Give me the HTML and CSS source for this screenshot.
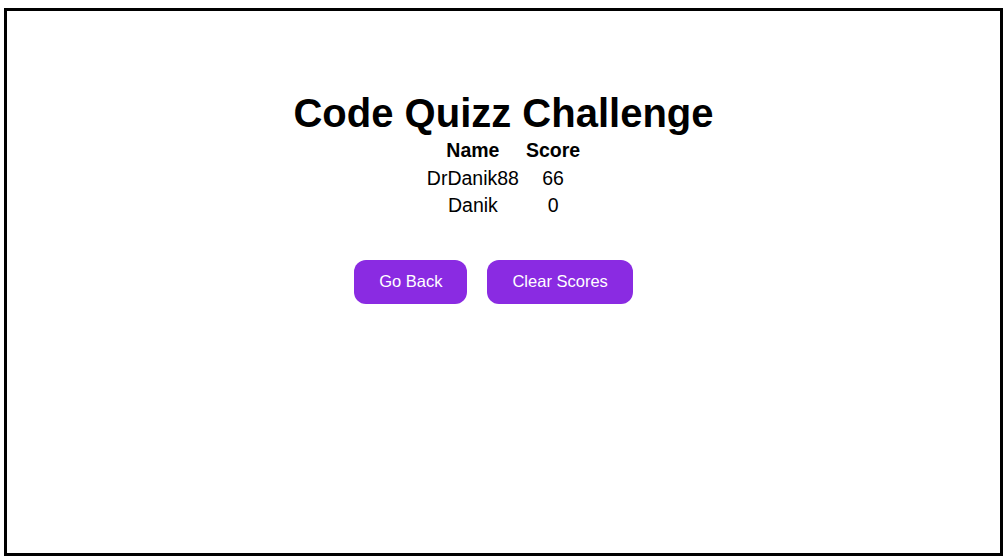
FILE: index.html
```html
<!DOCTYPE html>
<html lang="en">
<head>
<meta charset="utf-8">
<title>Code Quizz Challenge - High Scores</title>
<link rel="stylesheet" href="styles.css">
</head>
<body>
<main class="frame">
  <h1 class="title">Code Quizz Challenge</h1>
  <table class="scores">
    <thead>
      <tr><th>Name</th><th>Score</th></tr>
    </thead>
    <tbody>
      <tr><td>DrDanik88</td><td>66</td></tr>
      <tr><td>Danik</td><td>0</td></tr>
    </tbody>
  </table>
  <div class="actions">
    <button class="btn">Go Back</button>
    <button class="btn">Clear Scores</button>
  </div>
</main>
</body>
</html>
```

FILE: styles.css
```css
html, body {
  margin: 0;
  padding: 0;
  background: #fff;
}

body {
  font-family: "Liberation Sans", Arial, sans-serif;
  color: #000;
}

.frame {
  box-sizing: border-box;
  margin: 8px 2px 0 4px;
  height: 548px;
  border: 3px solid #000;
  padding-top: 79px;
  display: flex;
  flex-direction: column;
  align-items: center;
}

.title {
  margin: 0;
  font-size: 40px;
  font-weight: bold;
  line-height: 46px;
}

.scores {
  margin-top: 1px;
  border-collapse: collapse;
  font-size: 19.5px;
  line-height: 27.5px;
}

.scores th,
.scores td {
  padding: 0 3.5px;
  text-align: center;
}

.scores th {
  font-weight: bold;
}

.actions {
  margin-top: 40px;
  display: flex;
}

.btn {
  margin-right: 20px;
  height: 44px;
  padding: 0 25px;
  border: none;
  border-radius: 12px;
  background: #8a2be2;
  color: #fff;
  font-family: "Liberation Sans", Arial, sans-serif;
  font-size: 16.5px;
}
```
